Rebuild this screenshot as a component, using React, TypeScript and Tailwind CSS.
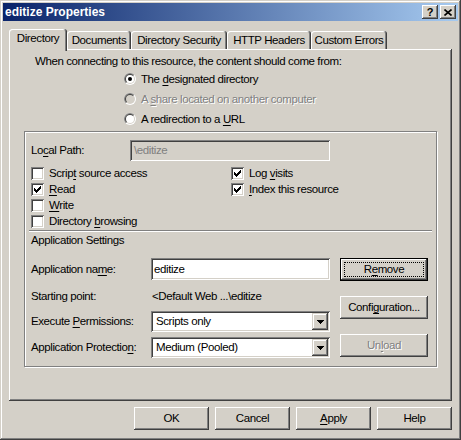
import type { ReactNode } from "react";

const raised =
	"shadow-[inset_-1px_-1px_#404040,inset_1px_1px_#ffffff,inset_-2px_-2px_#808080,inset_2px_2px_#d4d0c8]";
const sunken =
	"shadow-[inset_1px_1px_#808080,inset_-1px_-1px_#ffffff,inset_2px_2px_#404040,inset_-2px_-2px_#d4d0c8]";
const comboBtn =
	"shadow-[inset_-1px_-1px_#404040,inset_1px_1px_#d4d0c8,inset_-2px_-2px_#808080,inset_2px_2px_#ffffff]";
const grayText = "text-[#808080] [text-shadow:1px_1px_0_#ffffff]";

// mnemonic letter
function Mn({ c }: { c: string }) {
	return <span className="underline decoration-1 underline-offset-[2px]">{c}</span>;
}

function Radio({ checked, disabled }: { checked?: boolean; disabled?: boolean }) {
	return (
		<svg width="12" height="12" viewBox="0 0 12 12" className="shrink-0">
			<circle cx="6" cy="6" r="6" fill="#ffffff" />
			<path d="M1.757 10.243 A6 6 0 0 1 10.243 1.757 Z" fill="#808080" />
			<circle cx="6" cy="6" r="5" fill="#d4d0c8" />
			<path d="M2.464 9.536 A5 5 0 0 1 9.536 2.464 Z" fill="#404040" />
			<circle cx="6" cy="6" r="4" fill={disabled ? "#d4d0c8" : "#ffffff"} />
			{checked && <circle cx="6" cy="6" r="2" fill="#000000" />}
		</svg>
	);
}

function RadioRow({ checked, disabled, children }: { checked?: boolean; disabled?: boolean; children: ReactNode }) {
	return (
		<div className="h-[20px] flex items-center gap-[5px]">
			<Radio checked={checked} disabled={disabled} />
			<span className={disabled ? grayText : ""}>{children}</span>
		</div>
	);
}

function Check({ checked, children }: { checked?: boolean; children: ReactNode }) {
	return (
		<div className="h-[16px] flex items-center gap-[5px]">
			<div className={`w-[13px] h-[13px] bg-white ${sunken} flex items-center justify-center`}>
				{checked && (
					<svg width="7" height="7" viewBox="0 0 7 7" shapeRendering="crispEdges">
						<path
							d="M6 0h1v3h-1z M5 1h1v3h-1z M4 2h1v3h-1z M3 3h1v3h-1z M2 4h1v3h-1z M1 3h1v3h-1z M0 2h1v3h-1z"
							fill="#000000"
						/>
					</svg>
				)}
			</div>
			<span>{children}</span>
		</div>
	);
}

function Btn({
	children,
	w = "w-[88px]",
	isDefault,
	disabled,
}: {
	children: ReactNode;
	w?: string;
	isDefault?: boolean;
	disabled?: boolean;
}) {
	if (isDefault) {
		return (
			<div className={`${w} h-[23px] border border-black bg-[#d4d0c8] ${raised} flex p-[3px]`}>
				<div className="flex-1 border border-dotted border-black flex items-center justify-center">
					{children}
				</div>
			</div>
		);
	}
	return (
		<div
			className={`${w} h-[23px] bg-[#d4d0c8] ${raised} flex items-center justify-center ${disabled ? grayText : ""}`}
		>
			{children}
		</div>
	);
}

function Select({ value }: { value: string }) {
	return (
		<div className={`w-[179px] h-[21px] bg-white ${sunken} flex items-stretch p-[2px]`}>
			<div className="flex-1 pl-[3px] flex items-center">{value}</div>
			<div className={`w-[16px] bg-[#d4d0c8] ${comboBtn} flex items-center justify-center`}>
				<svg width="7" height="4" viewBox="0 0 7 4" shapeRendering="crispEdges">
					<path d="M0 0h7v1h-1v1h-1v1h-1v1h-1v-1h-1v-1h-1v-1h-1z" fill="#000000" />
				</svg>
			</div>
		</div>
	);
}

const tabs = [
	{ label: "Documents", w: "w-[64px]" },
	{ label: "Directory Security", w: "w-[96px]" },
	{ label: "HTTP Headers", w: "w-[84px]" },
	{ label: "Custom Errors", w: "w-[76px]" },
];

export default function App() {
	return (
		<div
			className={`w-[461px] h-[440px] overflow-hidden whitespace-nowrap bg-[#d4d0c8] px-[3px] pt-[3px] flex flex-col text-[11.5px] leading-[15px] tracking-[-0.4px] text-black font-['Liberation_Sans',Arial,sans-serif] shadow-[inset_-1px_-1px_#404040,inset_1px_1px_#d4d0c8,inset_-2px_-2px_#808080,inset_2px_2px_#ffffff]`}
		>
			{/* Title bar */}
			<div className="h-[18px] flex items-center justify-between pl-[2px] pr-[2px] bg-[linear-gradient(to_right,#0a246a,#a6caf0)]">
				<span className="text-white font-bold text-[12px] tracking-normal">editize Properties</span>
				<div className="flex gap-[2px]">
					<div className={`w-[16px] h-[14px] bg-[#d4d0c8] ${raised} flex items-center justify-center`}>
						<span className="font-bold text-[11px] leading-[11px] tracking-normal">?</span>
					</div>
					<div className={`w-[16px] h-[14px] bg-[#d4d0c8] ${raised} flex items-center justify-center`}>
						<svg width="8" height="7" viewBox="0 0 8 7">
							<path d="M0.5 0.5L7.5 6.5M7.5 0.5L0.5 6.5" stroke="#000000" strokeWidth="1.6" />
						</svg>
					</div>
				</div>
			</div>

			<div className="px-[6px] flex flex-col">
				{/* Tabs */}
				<div className="mt-[8px] h-[20px] flex items-end">
					<div className="relative z-10 -mb-[2px] h-[22px] w-[58px] pt-[2px] flex justify-center bg-[#d4d0c8] rounded-t-[3px] shadow-[inset_-1px_0_#404040,inset_1px_1px_#ffffff,inset_-2px_0_#808080]">
						Directory
					</div>
					{tabs.map((t) => (
						<div
							key={t.label}
							className={`${t.w} h-[18px] pt-[2px] flex justify-center rounded-t-[3px] shadow-[inset_-1px_0_#404040,inset_1px_1px_#ffffff,inset_-2px_0_#808080]`}
						>
							{t.label}
						</div>
					))}
				</div>

				{/* Panel */}
				<div className="h-[352px] flex flex-col shadow-[inset_-1px_-1px_#404040,inset_1px_1px_#ffffff,inset_-2px_-2px_#808080]">
					<div className="mt-[4px] h-[16px] pl-[26px] flex items-center">
						When connecting to this resource, the content should come from:
					</div>
					<div className="pl-[115px] flex flex-col">
						<RadioRow checked>
							The <Mn c="d" />esignated directory
						</RadioRow>
						<RadioRow disabled>
							A <Mn c="s" />hare located on another computer
						</RadioRow>
						<RadioRow>
							A redirection to a <Mn c="U" />RL
						</RadioRow>
					</div>

					{/* Group box */}
					<div className="mt-[2px] ml-[15px] w-[413px] h-[236px] border border-[#808080] shadow-[inset_1px_1px_#ffffff,1px_1px_#ffffff] pl-[6px] flex flex-col">
						<div className="mt-[8px] h-[21px] flex items-center">
							<div className="w-[99px]">
								Lo<Mn c="c" />al Path:
							</div>
							<div className={`w-[200px] h-[21px] ${sunken} flex items-center pl-[4px] text-[#808080]`}>
								\editize
							</div>
						</div>

						<div className="mt-[4px] flex">
							<div className="w-[200px] flex flex-col">
								<Check>
									Scrip<Mn c="t" /> source access
								</Check>
								<Check checked>
									<Mn c="R" />ead
								</Check>
								<Check>
									<Mn c="W" />rite
								</Check>
								<Check>
									Directory <Mn c="b" />rowsing
								</Check>
							</div>
							<div className="flex flex-col">
								<Check checked>
									Log <Mn c="v" />isits
								</Check>
								<Check checked>
									<Mn c="I" />ndex this resource
								</Check>
							</div>
						</div>

						<div className="mt-[1px] -ml-[2px] w-[403px] h-[2px] border-t border-b border-t-[#808080] border-b-white" />
						<div className="h-[17px] flex items-center">Application Settings</div>

						<div className="mt-[9px] flex">
							<div className="w-[299px] flex flex-col">
								<div className="h-[22px] flex items-center">
									<div className="w-[120px]">
										Application na<Mn c="m" />e:
									</div>
									<div className={`w-[179px] h-[22px] bg-white ${sunken} flex items-center pl-[3px]`}>
										editize
									</div>
								</div>
								<div className="mt-[8px] h-[16px] flex items-center">
									<div className="w-[120px]">Starting point:</div>
									<div className="pl-[1px]">&lt;Default Web ...\editize</div>
								</div>
								<div className="mt-[7px] h-[21px] flex items-center">
									<div className="w-[120px]">
										Execute <Mn c="P" />ermissions:
									</div>
									<Select value="Scripts only" />
								</div>
								<div className="mt-[5px] h-[21px] flex items-center">
									<div className="w-[120px]">
										Application Protectio<Mn c="n" />:
									</div>
									<Select value="Medium (Pooled)" />
								</div>
							</div>
							<div className="ml-[10px] flex flex-col">
								<Btn isDefault>
									R<Mn c="e" />move
								</Btn>
								<div className="mt-[15px]">
									<Btn>
										Confi<Mn c="g" />uration...
									</Btn>
								</div>
								<div className="mt-[15px]">
									<Btn disabled>
										Un<Mn c="l" />oad
									</Btn>
								</div>
							</div>
						</div>
					</div>
				</div>

				{/* Dialog buttons */}
				<div className="mt-[6px] flex justify-end gap-[6px]">
					<Btn w="w-[75px]">OK</Btn>
					<Btn w="w-[75px]">Cancel</Btn>
					<Btn w="w-[75px]">
						<Mn c="A" />pply
					</Btn>
					<Btn w="w-[75px]">Help</Btn>
				</div>
			</div>
		</div>
	);
}
